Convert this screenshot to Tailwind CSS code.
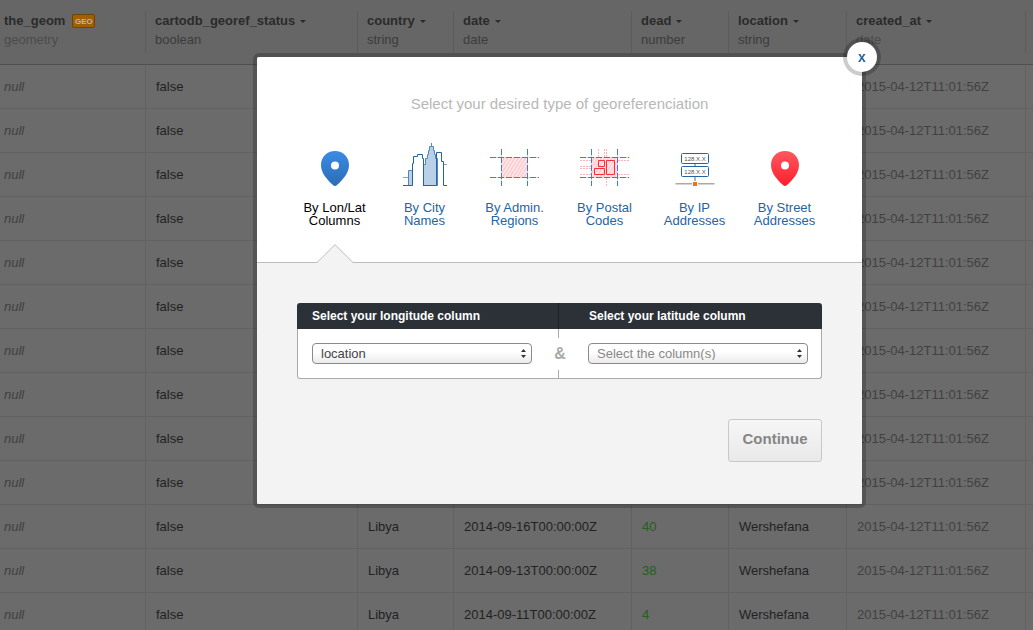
<!DOCTYPE html>
<html lang="en">
  <head>
    <meta charset="UTF-8" />
    <meta name="viewport" content="width=device-width, initial-scale=1" />
    <title>Georeference</title>
    <script src="https://cdn.jsdelivr.net/npm/@tailwindcss/browser@4"></script>
    <style>
      body {
        font-family: "Liberation Sans", Arial, sans-serif;
      }
    </style>
  </head>
  <body class="h-screen overflow-hidden bg-[#6b6b6b] text-[13px]">
    <!-- Data table, dimmed while the dialog is open -->
    <table class="w-full table-fixed border-separate border-spacing-0 text-left whitespace-nowrap">
      <colgroup>
        <col class="w-[146px]" />
        <col class="w-[212px]" />
        <col class="w-24" />
        <col class="w-[178px]" />
        <col class="w-[97px]" />
        <col class="w-[118px]" />
        <col class="w-[179px]" />
        <col />
      </colgroup>
      <thead>
        <tr id="columns" class="h-[65px] bg-[#666666] align-top"></tr>
      </thead>
      <tbody id="rows"></tbody>
    </table>

    <!-- Dialog -->
    <div class="fixed inset-0 flex items-start justify-center pt-[57px] pl-[86px]">
      <div role="dialog" aria-labelledby="dialogTitle" class="relative w-[605px] rounded-t-xs bg-[#f3f3f3]">
        <div class="pointer-events-none absolute -inset-1 rounded-md border-4 border-black/20"></div>
        <button
          type="button"
          aria-label="Close"
          class="absolute -top-[15px] -right-[15px] size-[30px] rounded-full bg-white text-sm leading-none font-bold text-[#2464a4] shadow-[0_0_0_4px_rgba(0,0,0,0.2)]"
        >
          x
        </button>

        <div class="rounded-t-xs border-b border-[#bdbdbd] bg-white pt-9">
          <h1 id="dialogTitle" class="text-center text-[15px] leading-[22px] text-[#b8b8b8]">
            Select your desired type of georeferenciation
          </h1>

          <nav class="mt-[27px] flex justify-center pb-[35px] text-center leading-[13px] text-[#2464a4]">
            <a href="#lonlat" class="relative flex w-[90px] flex-col items-center text-black">
              <svg class="mb-[11px] h-12 w-[60px]" viewBox="0 0 60 48" aria-hidden="true">
                <defs>
                  <linearGradient id="bluePin" x1="0" y1="0" x2="0" y2="1">
                    <stop offset="0" stop-color="#3a8be6" />
                    <stop offset="1" stop-color="#2c6cb5" />
                  </linearGradient>
                </defs>
                <path fill="url(#bluePin)" d="M30 9c-8 0-14 6-14 14 0 8 6 14.500 12 20 1.300 1.300 2.700 1.300 4 0 6-5.500 12-12 12-20 0-8-6-14-14-14z" />
                <circle cx="30" cy="23.500" r="4" fill="#fff" />
              </svg>
              By Lon/Lat<br />Columns
              <svg class="absolute -bottom-9 h-[19px] w-9" viewBox="0 0 36 19" aria-hidden="true">
                <path d="M0 18.500 18 .7 36 18.500V19H0z" fill="#f3f3f3" />
                <path d="M0 18.500 18 .7 36 18.500" fill="none" stroke="#bdbdbd" />
              </svg>
            </a>

            <a href="#city" class="flex w-[90px] flex-col items-center">
              <svg class="mb-[11px] h-12 w-[60px]" viewBox="0 0 60 48" fill="none" stroke="#2464a4" aria-hidden="true">
                <path stroke="#7ba6d1" d="M8 35.500h5M48.500 22.500H52" />
                <path fill="#b9d0e8" stroke="#4e88c2" d="M13.500 43.500v-15h4v15z" />
                <path fill="#b9d0e8" stroke="#4e88c2" d="M28.500 43.500v-21h2v-6h2v-4h1v-4h1v-4h2V1v3.500h2v4h1v4h1v4h2v27z" />
                <path d="M8 43.500h9.500v-22h1v-7h4v-2h5v4h1v27M28 43.500h13.500v-33h5v9h2v24H52" />
              </svg>
              By City<br />Names
            </a>

            <a href="#regions" class="flex w-[90px] flex-col items-center">
              <svg class="mb-[11px] h-12 w-[60px]" viewBox="0 0 60 48" fill="none" aria-hidden="true">
                <defs>
                  <pattern id="hatch" width="3" height="3" patternUnits="userSpaceOnUse" patternTransform="rotate(32)">
                    <path fill="#fff0f1" d="M0 0h3v3H0z" />
                    <path fill="#ffc4c8" d="M0 0h1.500v3H0z" />
                  </pattern>
                </defs>
                <path fill="url(#hatch)" d="M16.500 15.500h26v20h-26z" />
                <path stroke="#ffc4c8" d="M16.500 7v37M42.500 7v37M5 15.500h49M5 35.500h49" />
                <path stroke="#3b7fdc" stroke-dasharray="6 2" d="M16.500 7v37M42.500 7v37M5 15.500h49M5 35.500h49" />
              </svg>
              By Admin.<br />Regions
            </a>

            <a href="#postal" class="flex w-[90px] flex-col items-center">
              <svg class="mb-[11px] h-12 w-[60px]" viewBox="0 0 60 48" fill="none" aria-hidden="true">
                <path fill="url(#hatch)" d="M16.500 15.500h26v20h-26z" />
                <path stroke="#ffb3b8" stroke-dasharray="2 1" d="M23.500 7v9M29.500 7v9M31.500 7v9M31.500 36v8M5 18.500h11M5 24.500h11M5 26.500h11M5 32.500h11M43 18.500h11M43 32.500h11" />
                <path stroke="#ffc4c8" d="M16.500 7v37M42.500 7v37M5 15.500h49M5 35.500h49" />
                <path stroke="#3b7fdc" stroke-dasharray="6 2" d="M16.500 7v37M42.500 7v37M5 15.500h49M5 35.500h49" />
                <path stroke="#fb2f3b" d="M23.500 18.500h6v6h-6zM31.500 18.500h8v14h-8zM19.500 26.500h10v6h-10z" />
              </svg>
              By Postal<br />Codes
            </a>

            <a href="#ip" class="flex w-[90px] flex-col items-center">
              <svg class="mb-[11px] h-12 w-[60px]" viewBox="0 0 60 48" fill="none" aria-hidden="true">
                <path stroke="#999" d="M30 21v18" stroke-width="1.500" />
                <path stroke="#aaa" d="M10.500 41.700h39" stroke-width="1.500" />
                <rect x="16.500" y="11.500" width="27" height="10" rx="1" fill="#fff" stroke="#2464a4" />
                <rect x="16.500" y="24.500" width="27" height="10" rx="1" fill="#fff" stroke="#2464a4" />
                <path fill="#fff" d="M27 39h6v6h-6z" />
                <path fill="#f9700e" d="M28 40h4v4h-4z" />
                <g fill="#555" font-size="6" text-anchor="middle">
                  <text x="30" y="19">128.X.X</text>
                  <text x="30" y="32">128.X.X</text>
                </g>
              </svg>
              By IP<br />Addresses
            </a>

            <a href="#street" class="flex w-[90px] flex-col items-center">
              <svg class="mb-[11px] h-12 w-[60px]" viewBox="0 0 60 48" aria-hidden="true">
                <defs>
                  <linearGradient id="redPin" x1="0" y1="0" x2="0" y2="1">
                    <stop offset="0" stop-color="#ff5860" />
                    <stop offset="1" stop-color="#fb1f2c" />
                  </linearGradient>
                </defs>
                <path fill="url(#redPin)" d="M30 9c-8 0-14 6-14 14 0 8 6 14.500 12 20 1.300 1.300 2.700 1.300 4 0 6-5.500 12-12 12-20 0-8-6-14-14-14z" />
                <circle cx="30" cy="23.500" r="4" fill="#fff" />
              </svg>
              By Street<br />Addresses
            </a>
          </nav>
        </div>

        <form class="px-10 pt-10 pb-[42px]">
          <div class="flex h-[26px] overflow-hidden rounded-t-[3px] bg-[#2c3138] text-[12px] leading-[27px] font-bold text-white">
            <label for="longitude" class="w-[262px] border-r border-[#1d2025] pl-[15px]">Select your longitude column</label>
            <label for="latitude" class="flex-1 pl-[30px]">Select your latitude column</label>
          </div>
          <div class="flex h-[50px] overflow-hidden rounded-b-[3px] border border-t-0 border-[#aaaaaa] bg-white">
            <div class="relative w-[261px] border-r border-[#aaaaaa] pt-[14px] pl-[14px]">
              <div class="relative h-[21px] w-[220px]">
                <select id="longitude" class="size-full appearance-none rounded-[4px] border border-[#8a8a8a] bg-linear-to-b from-white from-40% to-[#ebebeb] pl-2 text-[13px] leading-none text-[#444444]">
                  <option>location</option>
                </select>
                <svg class="pointer-events-none absolute top-[6px] right-[6px] h-[9px] w-[5px]" viewBox="0 0 5 9" fill="#333" aria-hidden="true">
                  <path d="M0 3 2.500 0 5 3zM0 6h5L2.500 9z" />
                </svg>
              </div>
              <span class="absolute top-[9px] -right-3 w-5 bg-white text-center text-base leading-8 font-bold text-[#aaaaaa]">&amp;</span>
            </div>
            <div class="flex-1 pt-[14px] pl-[29px]">
              <div class="relative h-[21px] w-[220px]">
                <select id="latitude" class="size-full appearance-none rounded-[4px] border border-[#8a8a8a] bg-linear-to-b from-white from-40% to-[#ebebeb] pl-2 text-[13px] leading-none text-[#888888]">
                  <option>Select the column(s)</option>
                </select>
                <svg class="pointer-events-none absolute top-[6px] right-[6px] h-[9px] w-[5px]" viewBox="0 0 5 9" fill="#333" aria-hidden="true">
                  <path d="M0 3 2.500 0 5 3zM0 6h5L2.500 9z" />
                </svg>
              </div>
            </div>
          </div>
          <div class="mt-10 flex justify-end">
            <button type="button" class="h-[43px] w-[94px] rounded-[3px] border border-[#c8c8c8] bg-linear-to-b from-[#f6f6f6] to-[#e9e9e9] pb-[2px] text-[15px] font-bold text-[#858585]">
              Continue
            </button>
          </div>
        </form>
      </div>
    </div>

    <script>
      const columns = [
        ["the_geom", "geometry"],
        ["cartodb_georef_status", "boolean"],
        ["country", "string"],
        ["date", "date"],
        ["dead", "number"],
        ["location", "string"],
        ["created_at", "date"],
      ];

      const created = "2015-04-12T11:01:56Z";
      const rows = Array.from({ length: 10 }, () => ["", "", "", "", created]);
      rows.push(
        ["Libya", "2014-09-16T00:00:00Z", "40", "Wershefana", created],
        ["Libya", "2014-09-13T00:00:00Z", "38", "Wershefana", created],
        ["Libya", "2014-09-11T00:00:00Z", "4", "Wershefana", created]
      );

      const geoBadge =
        '<span class="ml-[7px] h-[14px] w-[23px] rounded-xs border border-[#6f4300] bg-[#a06000] text-center text-[8px] leading-[13px] text-[#b8b8b8]">GEO</span>';
      const caret =
        '<svg class="mt-px ml-[5px] h-[3px] w-[6px]" viewBox="0 0 6 3" fill="#2b2b2b" aria-hidden="true"><path d="M0 0h6L3 3z" /></svg>';

      document.getElementById("columns").innerHTML =
        columns
          .map(([name, type], i) => {
            const pad = i === 0 ? "pl-1" : "pl-[9px]";
            const dim = i === 0 || i === 6 ? "text-[#4c4c4c]" : "text-[#3c3c3c]";
            return `<th class="border-b border-[#505050] p-0">
              <div class="mt-[11px] h-[42px] border-r border-[#5c5c5c] leading-[19px] ${pad}">
                <div class="flex items-center text-[#2b2b2b]">${name}${i === 0 ? geoBadge : caret}</div>
                <div class="font-normal ${dim}">${type}</div>
              </div>
            </th>`;
          })
          .join("") + '<th class="border-b border-[#505050]"></th>';

      const cell = "border-r border-b border-[#616161] p-0 pl-[10px]";
      document.getElementById("rows").innerHTML = rows
        .map(
          ([country, date, dead, location, createdAt]) => `
          <tr class="h-11 text-[#222222]">
            <td class="border-r border-b border-[#616161] p-0 pl-1 text-[#3f3f3f] italic">null</td>
            <td class="${cell}">false</td>
            <td class="${cell}">${country}</td>
            <td class="${cell}">${date}</td>
            <td class="${cell} text-[#23601a]">${dead}</td>
            <td class="${cell}">${location}</td>
            <td class="${cell} text-[#414141]">${createdAt}</td>
            <td class="border-b border-[#616161]"></td>
          </tr>`
        )
        .join("");
    </script>
  </body>
</html>
